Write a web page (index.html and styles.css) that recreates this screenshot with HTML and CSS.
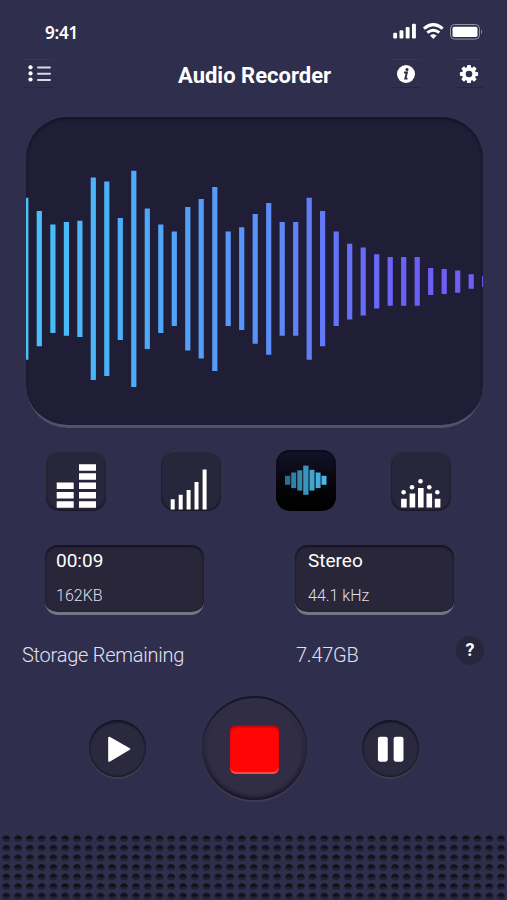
FILE: index.html
```html
<!DOCTYPE html>
<html lang="en">
<head>
<meta charset="utf-8">
<title>Audio Recorder</title>
<link rel="stylesheet" href="styles.css">
</head>
<body>
<main class="phone">
  <div class="status">
    <span class="time">9:41</span>
    <svg class="status-icons" width="92" height="18" viewBox="0 0 92 18">
      <g fill="#fff">
        <rect x="1.2" y="9.7" width="3.9" height="5.8" rx="1.2"/>
        <rect x="7.5" y="7.3" width="3.9" height="8.2" rx="1.2"/>
        <rect x="13.7" y="4" width="3.9" height="11.5" rx="1.2"/>
        <rect x="20" y=".8" width="3.9" height="14.7" rx="1.2"/>
      </g>
      <g fill="none" stroke="#fff" stroke-width="3">
        <path d="M31.900 5.700Q41.300-2.400 50.700 5.700"/>
        <path d="M35.300 9.700Q41.300 4.900 47.300 9.700"/>
      </g>
      <path d="M38 12.600Q41.300 10 44.600 12.600L41.300 16Z" fill="#fff"/>
      <rect x="58.500" y="1.500" width="29" height="14.600" rx="4" fill="none" stroke="#96949f" stroke-width="1"/>
      <rect x="60.500" y="3.700" width="25" height="10.400" rx="1.800" fill="#fff"/>
      <path d="M89.200 6.400Q91.200 8.800 89.200 11.200Z" fill="#96949f"/>
    </svg>
  </div>

  <header class="bar">
    <button class="tool" aria-label="Recordings">
      <svg class="list" width="26" height="20" viewBox="0 0 26 20">
        <g fill="#fff"><circle cx="4.500" cy="3.300" r="2.100"/><circle cx="4.500" cy="9.400" r="2.100"/><circle cx="4.500" cy="15.500" r="2.100"/></g>
        <path d="M12 3.500H24M12 9.700H24M12 15.900H24" stroke="#d9d8e4" stroke-width="2" stroke-linecap="round"/>
      </svg>
    </button>
    <h1>Audio Recorder</h1>
    <button class="tool" aria-label="Information">
      <svg width="20" height="20" viewBox="0 0 20 20">
        <circle cx="10" cy="10" r="9" fill="#fff"/>
        <circle cx="11" cy="5.400" r="1.500" fill="#292742"/>
        <path d="M8 8.500H10.900L9.300 14.600H11.500" fill="none" stroke="#292742" stroke-width="1.900"/>
      </svg>
    </button>
    <button class="tool gear" aria-label="Settings">
      <svg width="20" height="20" viewBox="-10 -10 20 20">
        <g fill="#fff">
          <circle r="7"/>
          <g id="teeth"><rect x="-2" y="-9.100" width="4" height="18.200" rx=".9"/><rect x="-9.100" y="-2" width="18.200" height="4" rx=".9"/></g>
          <use href="#teeth" transform="rotate(45)"/>
        </g>
        <circle r="3.300" fill="#302e4d"/>
      </svg>
    </button>
  </header>

  <section class="scope">
    <svg width="457" height="308" viewBox="26 117 457 308">
      <defs>
        <linearGradient id="wave" gradientUnits="userSpaceOnUse" x1="26" y1="0" x2="483" y2="0">
          <stop offset="0" stop-color="#48c2f8"/>
          <stop offset=".24" stop-color="#4dabf8"/>
          <stop offset=".5" stop-color="#5992f8"/>
          <stop offset=".68" stop-color="#6573f8"/>
          <stop offset=".85" stop-color="#6c5ff7"/>
          <stop offset="1" stop-color="#715df5"/>
        </linearGradient>
      </defs>
      <path fill="none" stroke="url(#wave)" stroke-width="5.200" d="M25.800 197.700V359.700M39.300 211V346.300M52.900 224.500V333M66.400 222V335.700M79.900 220.700V337M93.300 177.500V380M106.800 181.500V376M120.300 218V340M133.800 170.700V387M147.300 208.500V349M160.800 224.500V333M174.300 231.500V326M187.800 207V350.500M201.200 199V358.500M214.800 187V371M228.200 231.500V326M241.700 227.300V330M255.200 214V343.700M268.700 203V354.700M282.200 222V335.700M295.700 222V335.700M309.200 197.700V359.700M322.600 211V346.300M336.200 231.500V326M349.700 243.700V319.500M363.200 247.500V315.500M376.700 254.300V308.500M390.200 257V305.800M403.700 257V305.800M417.200 257V305.800M430.700 268V295M444.200 269V294M457.700 270.500V292.700M471.200 274.300V288.700M484.700 276V287"/>
    </svg>
  </section>

  <nav class="modes">
    <button class="mode" aria-label="Level meter">
      <svg width="60" height="60" viewBox="0 0 60 60" fill="#fff">
        <path d="M10.700 31.500h17v6.500h-17zM10.700 41h17v6.500h-17zM10.700 50.200h17v6.500h-17zM33 13.200h17v6.500h-17zM33 22.300h17v6.500h-17zM33 31.500h17v6.500h-17zM33 41h17v6.500h-17zM33 50.200h17v6.500h-17z"/>
      </svg>
    </button>
    <button class="mode" aria-label="Rising bars">
      <svg width="60" height="60" viewBox="0 0 60 60" fill="#fff">
        <path d="M9.700 48.200h4v10.200h-4zM17.700 43.700h4v14.700h-4zM25.600 39h4v19.400h-4zM33.500 30.900h4v27.500h-4zM41.600 18.500h4v39.900h-4z"/>
      </svg>
    </button>
    <button class="mode active" aria-label="Waveform">
      <svg width="60" height="60" viewBox="0 0 60 60">
        <g transform="translate(0 -.7)">
          <path fill="#286f91" d="M9 25.500h5.300v9H9z"/>
          <path fill="#3081a8" d="M15.200 22.200h5v15.600h-5z"/>
          <path fill="#3489af" d="M21.300 20h5v20.300h-5z"/>
          <path fill="#3a94bd" d="M27.200 15.300h5.300v29.200h-5.300z"/>
          <path fill="#42a5d0" d="M33.500 19.500h5v20.800h-5z"/>
          <path fill="#45acdc" d="M39.600 22.200h5v15.600h-5z"/>
          <path fill="#4bb8ef" d="M45.500 25.500h5v9h-5z"/>
        </g>
      </svg>
    </button>
    <button class="mode" aria-label="Peaks">
      <svg width="60" height="60" viewBox="0 0 60 60" fill="#fff">
        <g transform="translate(.3 -.8)">
          <path d="M9.800 48.500h5.600v8.800H9.800zM18.300 43.300h5.600v14h-5.600zM26.700 37.800h5.600v19.500h-5.600zM35.200 43.300h5.600v14h-5.600zM43.500 48.500h5.600v8.800h-5.600z"/>
          <circle cx="12.300" cy="42" r="2.300"/><circle cx="20.700" cy="37" r="2.300"/><circle cx="29.200" cy="31" r="2.300"/><circle cx="38" cy="37" r="2.300"/><circle cx="46" cy="42" r="2.300"/>
        </g>
      </svg>
    </button>
  </nav>

  <section class="cards">
    <div class="card"><strong>00:09</strong><span>162KB</span></div>
    <div class="card stereo"><strong>Stereo</strong><span>44.1 kHz</span></div>
  </section>

  <section class="storage">
    <span class="label">Storage Remaining</span>
    <span class="amount">7.47GB</span>
    <button class="help">?</button>
  </section>

  <section class="controls">
    <button class="round" aria-label="Play">
      <svg width="57" height="57" viewBox="0 0 58 58"><path d="M20.500 18L41 29.500L20.500 41.500Z" fill="#fff" stroke="#fff" stroke-width="2" stroke-linejoin="round"/></svg>
    </button>
    <button class="round record" aria-label="Stop"><span class="stop"></span></button>
    <button class="round" aria-label="Pause">
      <svg width="57" height="57" viewBox="0 0 58 58" fill="#fff"><rect x="16.200" y="17" width="10" height="25.500" rx="2.200"/><rect x="32.200" y="17" width="10" height="25.500" rx="2.200"/></svg>
    </button>
  </section>

  <svg class="grille" width="507" height="66" viewBox="0 834 507 66">
    <defs>
      <pattern id="holes" patternUnits="userSpaceOnUse" x=".4" y="833.300" width="11.780" height="9.560">
        <ellipse cx="5.900" cy="5.500" rx="4" ry="3.200" fill="#222131"/>
        <path d="M2.300 5.700Q2.600 2.200 5.900 2.200T9.500 5.700Z" fill="#11111b"/>
      </pattern>
    </defs>
    <rect y="834" width="507" height="66" fill="url(#holes)"/>
  </svg>
</main>
</body>
</html>
```
FILE: styles.css
```css
* { box-sizing: border-box; }

body {
  margin: 0;
  background: #302e4d;
  color: #fff;
  font-family: Roboto, "Liberation Sans", sans-serif;
}

button {
  border: 0;
  padding: 0;
  margin: 0;
  background: none;
  color: inherit;
  font: inherit;
}

svg { display: block; flex: none; }
h1 { margin: 0; }

.phone {
  width: 507px;
  height: 900px;
  overflow: hidden;
  display: flex;
  flex-direction: column;
}

.status {
  height: 58px;
  padding: 23px 23px 0 45px;
  display: flex;
  justify-content: space-between;
}

.time {
  font: 600 17px/19px "Noto Sans", sans-serif;
  letter-spacing: -0.2px;
}

.bar {
  height: 59px;
  padding: 1px 23px 0 24px;
  display: flex;
  align-items: flex-start;
}

.tool {
  width: 30px;
  height: 29px;
  display: flex;
  justify-content: center;
  align-items: center;
  border-top: 1px solid #39364f;
  border-bottom: 1px solid #282540;
}

.gear { margin-left: 33px; }

.bar h1 {
  flex: 1;
  padding-left: 124px;
  font-size: 22px;
  line-height: 34px;
  font-weight: 700;
  white-space: nowrap;
}

.scope {
  width: 457px;
  height: 311px;
  flex: none;
  margin-left: 26px;
  border-radius: 42px;
  border-bottom: 3px solid #555267;
  background: #201e36;
  box-shadow: inset 0 2px 3px #141323;
  overflow: hidden;
}

.modes {
  height: 117px;
  padding: 22px 56px 0 46px;
  display: flex;
  justify-content: space-between;
}

.mode {
  width: 60px;
  height: 61px;
  border-radius: 14px;
  background: #28263b;
  box-shadow: inset 0 2px 1px #34324a, inset 0 -1px 2px #151421, inset 0 0 2px #1b192c;
}

.active {
  background: linear-gradient(#14122a, #050509 60%, #000);
  box-shadow: inset 0 1px 2px #080713;
}

.cards {
  height: 71px;
  padding: 0 53px 0 45px;
  display: flex;
  justify-content: space-between;
}

.card {
  width: 159px;
  height: 70px;
  padding: 4px 11px 0;
  border-radius: 13px;
  background: #292639;
  border-bottom: 3px solid #777585;
  box-shadow: inset 0 2px 2px #171522, inset 0 0 2px #191827;
  display: flex;
  flex-direction: column;
}

.card strong {
  font-size: 19px;
  line-height: 24px;
  font-weight: 400;
}

.card span {
  margin-top: 12px;
  font-size: 16px;
  line-height: 22px;
  font-weight: 300;
  color: #e0deea;
}

.stereo { padding-left: 13px; }

.storage {
  height: 79px;
  padding: 19px 23px 0 22px;
  display: flex;
  font-size: 20px;
  line-height: 40px;
  letter-spacing: -0.25px;
  font-weight: 300;
  color: #e2e0ee;
}

.label { width: 274px; }

.help {
  width: 28px;
  height: 30px;
  margin-left: auto;
  border-radius: 50%;
  background: #28263a;
  box-shadow: inset 0 1px 1px #353348;
  font-size: 18px;
  line-height: 30px;
  font-weight: 700;
  color: #fff;
}

.controls {
  height: 138px;
  padding: 1px 88px 0 89px;
  display: flex;
  justify-content: space-between;
}

.round {
  width: 57px;
  height: 57px;
  margin-top: 24px;
  border-radius: 50%;
  background: #2b293e;
  box-shadow: inset 0 2px 2px #12111e, inset 0 -1px 2px #171624, 0 2px 1px #403d53;
}

.record {
  width: 105px;
  height: 104px;
  margin-top: 0;
  display: flex;
  align-items: center;
  justify-content: center;
  background: #302d45;
  box-shadow: inset 0 2px 1px #151421, inset 0 3px 3px 1px #353348, inset 0 -2px 4px #151421, inset 0 0 5px #1c1a2b, 0 2px 1px #403d53;
}

.stop {
  width: 49px;
  height: 49px;
  margin-top: 2px;
  border-radius: 6px;
  background: #ff0505;
  box-shadow: inset 0 2px 2px #b4000c, inset 0 -2px 1px #ff4b4b;
}

.grille { margin-top: auto; }
```
